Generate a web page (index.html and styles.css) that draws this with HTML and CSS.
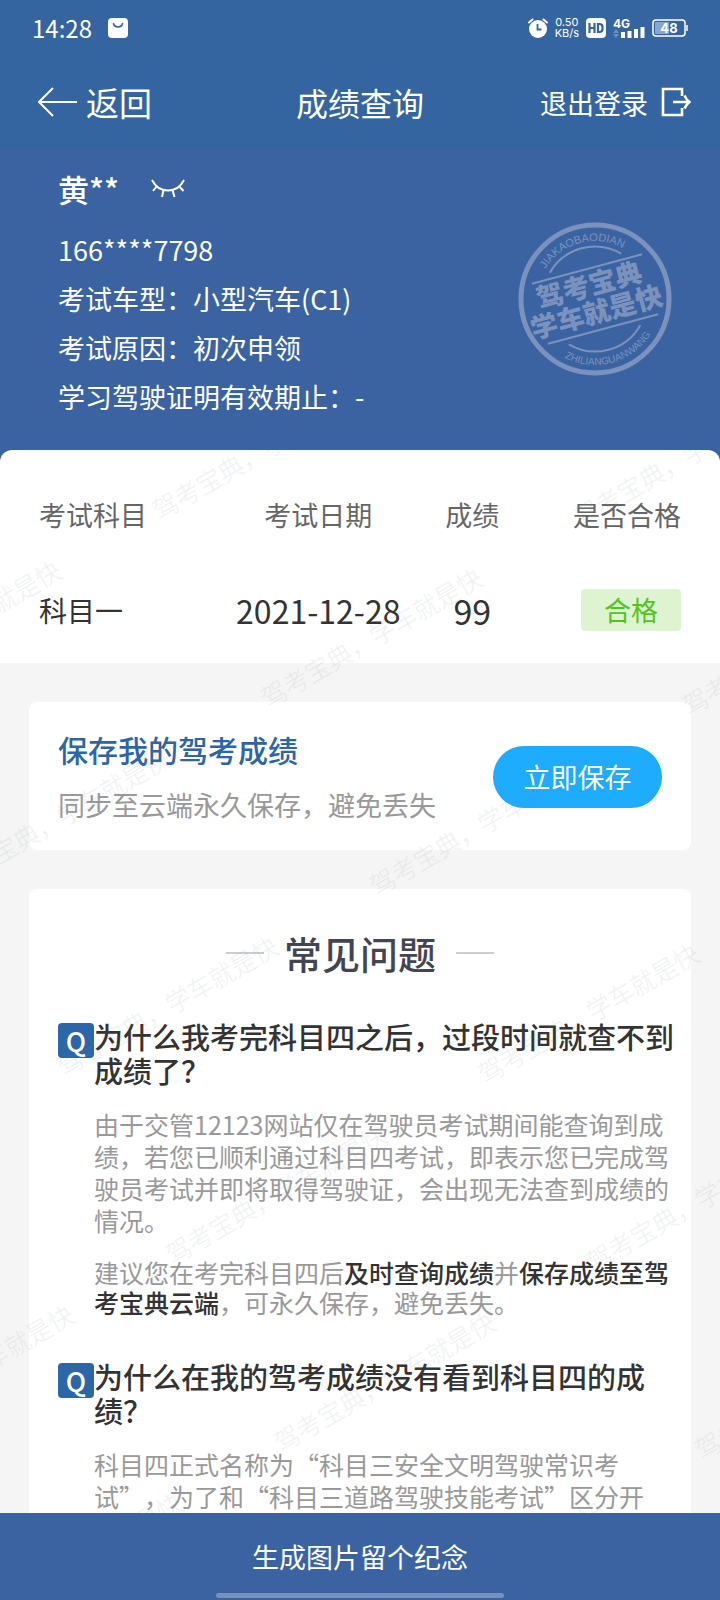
FILE: index.html
```html
<!DOCTYPE html>
<html lang="zh-CN">
<head>
    <meta charset="UTF-8">
    <meta name="viewport" content="width=device-width, initial-scale=1.0">
    <title>成绩查询</title>
    <link rel="stylesheet" href="styles.css">
</head>
<body>
    <header class="header">
        <div class="status-bar">
            <span class="time">14:28</span>
            <svg class="bag" width="20" height="20" viewBox="0 0 20 20">
                <rect width="20" height="20" rx="4" fill="#fff"/>
                <path d="M5.500 5.500c.8 4.600 8.200 4.600 9 0" fill="none" stroke="#3565a0" stroke-width="1.600" stroke-linecap="round"/>
            </svg>
            <div class="status-right">
                <svg width="20" height="20" viewBox="0 0 20 20">
                    <circle cx="10" cy="11" r="9" fill="#fff"/>
                    <path d="M1 4.500L4.500 1.500M15.500 1.500L19 4.500" stroke="#fff" stroke-width="2" stroke-linecap="round"/>
                    <path d="M9.500 6v5.500h4" fill="none" stroke="#3565a0" stroke-width="1.800"/>
                </svg>
                <span class="speed"><span>0.50</span><span>KB/s</span></span>
                <svg width="20" height="20" viewBox="0 0 20 20">
                    <rect width="20" height="20" rx="4" fill="#fff"/>
                    <path d="M3.500 5v10M8.500 5v10M4 10h4.500M12 6h1.500q3 0 3 3v2q0 3-3 3H12z" fill="none" stroke="#3565a0" stroke-width="2.200"/>
                </svg>
                <svg width="32" height="24" viewBox="0 0 32 24">
                    <text class="net" x="0" y="12">4G</text>
                    <path d="M3 13l3 4H0zM3 22l3-4H0z" fill="#6f8fbd"/>
                    <path d="M10 22v-6M16.500 22v-7M23 22v-9M29.500 22V11" stroke="#fff" stroke-width="4"/>
                </svg>
                <svg width="36" height="18" viewBox="0 0 36 18">
                    <rect x="3" y="3" width="14" height="12" fill="#8ba4cb"/>
                    <rect x="1" y="1" width="32" height="16" rx="3" fill="none" stroke="#fff" stroke-width="1.500"/>
                    <path d="M35 6v6" stroke="#fff" stroke-width="1.500"/>
                    <text class="level" x="17" y="14">48</text>
                </svg>
            </div>
        </div>
        <nav class="nav">
            <a class="back" href="#">
                <svg width="39" height="30" viewBox="0 0 39 30">
                    <path d="M15 1L1 15l14 14M1 15h38" fill="none" stroke="#fff" stroke-width="2"/>
                </svg>
                返回
            </a>
            <h1>成绩查询</h1>
            <a class="logout" href="#">
                退出登录
                <svg width="30" height="30" viewBox="0 0 30 30">
                    <path d="M21 9V2H2v26h19v-7M12 15h16M23.500 8.500q2 4.500 5 6.500q-3 2-5 6.500" fill="none" stroke="#fff" stroke-width="2.600"/>
                </svg>
            </a>
        </nav>
    </header>

    <section class="profile">
        <div class="name">
            黄**
            <button class="eye" type="button" aria-label="显示">
                <svg width="34" height="20" viewBox="0 0 34 20">
                    <path d="M1 1c7 14 25 14 32 0M6 7l-4 5M12.500 11l-1.500 7M21.500 11l2 7M28 7l4.500 5" fill="none" stroke="#fff" stroke-width="2"/>
                </svg>
            </button>
        </div>
        <p>166****7798</p>
        <p>考试车型：小型汽车(C1)</p>
        <p>考试原因：初次申领</p>
        <p>学习驾驶证明有效期止：-</p>

        <svg class="stamp" viewBox="-78 -78 156 156">
            <defs>
                <path id="arcTop" d="M-58 0A58 58 0 0 1 58 0"/>
                <path id="arcBottom" d="M-66 0A66 66 0 0 0 66 0"/>
            </defs>
            <circle r="74" fill="none" stroke="#7b92bf" stroke-width="5"/>
            <g transform="rotate(-15)" fill="#7b92bf">
                <path d="M-57 -31H57M-57 31H57M-37 -37A52 52 0 0 1 37 -37M-37 37A52 52 0 0 0 37 37" fill="none" stroke="#7b92bf" stroke-width="2"/>
                <text class="stamp-top"><textPath href="#arcTop" startOffset="50%">JIAKAOBAODIAN</textPath></text>
                <text class="stamp-bottom"><textPath href="#arcBottom" startOffset="50%">ZHILIANGUANWANG</textPath></text>
                <text class="stamp-main" x="-2" y="-5">驾考宝典</text>
                <text class="stamp-main" x="-2" y="23">学车就是快</text>
            </g>
        </svg>
    </section>

    <div class="content">
        <main class="scroll">
            <section class="results">
                <table>
                    <thead>
                        <tr>
                            <th>考试科目</th>
                            <th>考试日期</th>
                            <th>成绩</th>
                            <th>是否合格</th>
                        </tr>
                    </thead>
                    <tbody>
                        <tr>
                            <td>科目一</td>
                            <td class="date">2021-12-28</td>
                            <td class="score">99</td>
                            <td><span class="badge">合格</span></td>
                        </tr>
                    </tbody>
                </table>
            </section>

            <section class="card save">
                <div>
                    <h2>保存我的驾考成绩</h2>
                    <p>同步至云端永久保存，避免丢失</p>
                </div>
                <button class="save-btn" type="button">立即保存</button>
            </section>

            <section class="card faq">
                <h2>常见问题</h2>
                <article>
                    <span class="q">Q</span>
                    <div>
                        <h3>为什么我考完科目四之后，过段时间就查不到成绩了？</h3>
                        <p>由于交管12123网站仅在驾驶员考试期间能查询到成绩，若您已顺利通过科目四考试，即表示您已完成驾驶员考试并即将取得驾驶证，会出现无法查到成绩的情况。</p>
                        <p class="tip">建议您在考完科目四后<strong>及时查询成绩</strong>并<strong>保存成绩至驾考宝典云端</strong>，可永久保存，避免丢失。</p>
                    </div>
                </article>
                <article>
                    <span class="q">Q</span>
                    <div>
                        <h3>为什么在我的驾考成绩没有看到科目四的成绩？</h3>
                        <p>科目四正式名称为“科目三安全文明驾驶常识考试”，为了和“科目三道路驾驶技能考试”区分开</p>
                    </div>
                </article>
            </section>
        </main>

        <svg class="watermark" aria-hidden="true">
            <defs>
                <pattern id="wm" width="361" height="217" patternUnits="userSpaceOnUse" patternTransform="translate(131 41) rotate(-30)">
                    <text x="10" y="40">驾考宝典，学车就是快</text>
                </pattern>
            </defs>
            <rect width="100%" height="100%" fill="url(#wm)"/>
        </svg>
    </div>

    <footer class="footer">
        <button type="button">生成图片留个纪念</button>
        <div class="home-bar"></div>
    </footer>
</body>
</html>
```
FILE: styles.css
```css
:root {
    --header: #3565a0;
    --primary: #3b63a1;
    --link: #2c66a8;
    --text: #333;
    --text-light: #999;
    --bg: #f5f5f5;
}

* {
    margin: 0;
    padding: 0;
    box-sizing: border-box;
}

body {
    height: 100vh;
    display: flex;
    flex-direction: column;
    font-family: "Noto Sans CJK SC", sans-serif;
    font-size: 27px;
    color: var(--text);
    background: var(--bg);
    text-spacing-trim: space-all;
}

svg {
    display: block;
    flex-shrink: 0;
}

a {
    color: inherit;
    text-decoration: none;
}

button {
    border: none;
    background: none;
    color: inherit;
    font-family: inherit;
    font-size: inherit;
    cursor: pointer;
}

/* header */
.header {
    background: var(--header);
    color: #fff;
}

.status-bar {
    height: 56px;
    padding: 0 32px;
    display: flex;
    align-items: center;
    gap: 16px;
}

.time {
    font-size: 24px;
    line-height: 24px;
}

.status-right {
    margin-left: auto;
    display: flex;
    align-items: center;
    gap: 7px;
}

.speed {
    display: flex;
    flex-direction: column;
    align-items: center;
    font-family: Inter, sans-serif;
    font-size: 11px;
    line-height: 11px;
}

.net {
    font: 700 12px Inter, sans-serif;
    fill: #fff;
}

.level {
    font: 700 13px Inter, sans-serif;
    fill: #fff;
    text-anchor: middle;
}

.nav {
    height: 92px;
    padding: 0 29px;
    display: grid;
    grid-template-columns: 1fr auto 1fr;
    align-items: center;
}

.nav h1 {
    font-size: 32px;
    font-weight: 400;
}

.back {
    display: flex;
    align-items: center;
    gap: 9px;
    padding-left: 9px;
    font-size: 33px;
}

.logout {
    display: flex;
    align-items: center;
    justify-content: flex-end;
    gap: 13px;
}

/* profile */
.profile {
    position: relative;
    padding: 18px 58px 29px;
    background: var(--primary);
    color: #fff;
}

.name {
    display: flex;
    align-items: center;
    gap: 32px;
    margin-bottom: 13px;
    font-size: 31px;
    font-weight: 500;
    line-height: 46px;
}

.profile p {
    line-height: 49px;
}

.stamp {
    position: absolute;
    top: 73px;
    right: 47px;
    width: 156px;
    height: 156px;
}

.stamp text {
    text-anchor: middle;
}

.stamp-top {
    font: 11px "Liberation Sans", sans-serif;
}

.stamp-bottom {
    font: 10px "Liberation Sans", sans-serif;
}

.stamp-main {
    font-size: 27px;
    font-weight: 900;
}

/* content */
.content {
    position: relative;
    flex: 1;
    min-height: 0;
}

.scroll {
    height: 100%;
    overflow-y: auto;
    scrollbar-width: none;
    background: linear-gradient(var(--primary) 24px, var(--bg) 24px);
}

.watermark {
    position: absolute;
    inset: 0;
    width: 100%;
    height: 100%;
    font-size: 25px;
    font-weight: 300;
    fill: rgba(110, 125, 140, 0.13);
    pointer-events: none;
}

.results {
    padding: 16px 39px 5px;
    background: #fff;
    border-radius: 12px 12px 0 0;
}

table {
    width: 100%;
    table-layout: fixed;
    border-collapse: collapse;
}

th,
td {
    height: 96px;
    text-align: center;
    vertical-align: middle;
    white-space: nowrap;
}

th {
    width: 31%;
    font-weight: 400;
    color: #666;
}

th:first-child {
    width: 28%;
    text-align: left;
}

th:nth-child(3) {
    width: 17%;
}

th:last-child {
    width: 24%;
    text-align: right;
}

td {
    font-size: 28px;
}

td:first-child {
    text-align: left;
}

td:last-child {
    text-align: right;
}

.date {
    font-size: 32px;
}

.score {
    font-size: 34px;
}

.badge {
    display: inline-block;
    width: 100px;
    border-radius: 4px;
    background: #def4d1;
    color: #52c41a;
    font-size: 27px;
    line-height: 42px;
    text-align: center;
}

.card {
    margin: 39px 29px 0;
    padding: 0 29px;
    background: #fff;
    border-radius: 8px;
}

.save {
    display: flex;
    align-items: center;
    justify-content: space-between;
    padding: 19px 29px 18px;
}

.save h2 {
    color: var(--link);
    font-size: 30px;
    font-weight: 500;
    line-height: 56px;
}

.save p {
    color: var(--text-light);
    line-height: 55px;
}

.save-btn {
    width: 169px;
    height: 62px;
    border-radius: 31px;
    background: #1eacff;
    color: #fff;
}

.faq {
    padding: 40px 14px 40px 29px;
}

.faq h2 {
    display: flex;
    align-items: center;
    justify-content: center;
    gap: 20px;
    padding-right: 15px;
    color: #434650;
    font-size: 38px;
    font-weight: 500;
    line-height: 48px;
}

.faq h2::before,
.faq h2::after {
    content: "";
    width: 38px;
    height: 2px;
    background: #cccdd2;
}

.faq article {
    display: flex;
    align-items: flex-start;
    margin-top: 42px;
}

.q {
    flex-shrink: 0;
    width: 36px;
    height: 35px;
    margin-top: 4px;
    border-radius: 4px;
    background: var(--link);
    color: #fff;
    font-size: 27px;
    font-weight: 500;
    line-height: 35px;
    text-align: center;
}

.faq h3 {
    font-size: 29px;
    font-weight: 500;
    line-height: 34px;
}

.faq p {
    margin-top: 21px;
    color: var(--text-light);
    font-size: 25px;
    line-height: 32px;
}

.faq .tip {
    line-height: 30px;
}

.faq strong {
    color: var(--text);
    font-weight: 500;
}

/* footer */
.footer {
    background: var(--primary);
    color: #fff;
}

.footer button {
    display: block;
    width: 100%;
    height: 80px;
    padding-top: 6px;
}

.home-bar {
    width: 40%;
    height: 5px;
    margin: 0 auto 2px;
    border-radius: 3px;
    background: #7591be;
}
```
